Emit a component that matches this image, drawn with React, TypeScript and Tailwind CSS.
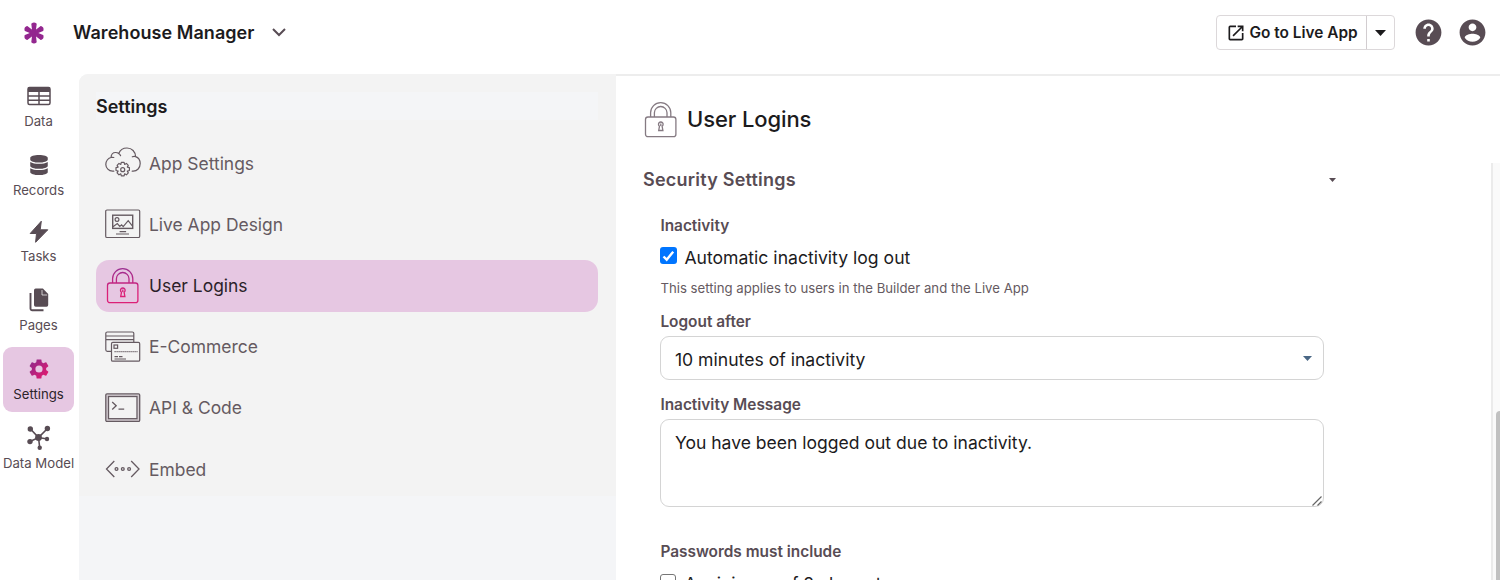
import type { ReactNode } from "react";
import clsx from "clsx";
import { FaDatabase } from "react-icons/fa";
import { MdHelp, MdOpenInNew } from "react-icons/md";

const TableIcon = () => (
    <svg width="24" height="20" viewBox="0 0 24 20" fill="none" stroke="currentColor" strokeWidth="1.5">
        <rect x="1" y="1.5" width="22" height="17" rx="1.5" />
        <path d="M1 1.5h22v4.5H1z" fill="currentColor" stroke="none" />
        <path d="M1 10h22M1 14.2h22M12 5v13.5" />
    </svg>
);

const BoltIcon = () => (
    <svg width="20" height="24" viewBox="0 0 20 24" fill="currentColor" stroke="currentColor" strokeWidth="1" strokeLinejoin="round">
        <path d="M12.3 1.2 1.2 13.5h6.3L6.6 22.3 18.8 9.8h-7.6z" />
    </svg>
);

const PagesIcon = () => (
    <svg width="20" height="24" viewBox="0 0 20 24" fill="currentColor">
        <path d="M6.7.5h7.2l5.3 5.4v11.2a1.7 1.7 0 0 1-1.7 1.7H6.7A1.7 1.7 0 0 1 5 17.1V2.2A1.7 1.7 0 0 1 6.7.5z" />
        <path d="M13 2v5h5.2" fill="none" stroke="#fff" strokeWidth=".7" />
        <path d="M1.5 5v15.6a1.7 1.7 0 0 0 1.7 1.7h11.3" fill="none" stroke="currentColor" strokeWidth="1.9" />
    </svg>
);

const GearIcon = () => (
    <svg width="24" height="24" viewBox="0 0 24 24">
        <defs>
            <linearGradient id="gear" x1="0" y1="0" x2="1" y2="1">
                <stop offset="0.1" stopColor="#932a8a" />
                <stop offset="0.9" stopColor="#e01a70" />
            </linearGradient>
        </defs>
        <path
            fill="url(#gear)"
            fillRule="evenodd"
            d="M19.14 12.94c.04-.3.06-.61.06-.94 0-.32-.02-.64-.07-.94l2.03-1.58c.18-.14.23-.41.12-.61l-1.92-3.32c-.12-.22-.37-.29-.59-.22l-2.39.96c-.5-.38-1.03-.7-1.62-.94l-.36-2.54c-.04-.24-.24-.41-.48-.41h-3.84c-.24 0-.43.17-.47.41l-.36 2.54c-.59.24-1.13.57-1.62.94l-2.39-.96c-.22-.08-.47 0-.59.22L2.74 8.87c-.12.21-.08.47.12.61l2.03 1.58c-.05.3-.09.63-.09.94s.02.64.07.94l-2.03 1.58c-.18.14-.23.41-.12.61l1.92 3.32c.12.22.37.29.59.22l2.39-.96c.5.38 1.03.7 1.62.94l.36 2.54c.05.24.24.41.48.41h3.84c.24 0 .44-.17.47-.41l.36-2.54c.59-.24 1.13-.56 1.62-.94l2.39.96c.22.08.47 0 .59-.22l1.92-3.32c.12-.22.07-.47-.12-.61l-2.01-1.58zM12 15.6a3.6 3.6 0 1 1 0-7.2 3.6 3.6 0 0 1 0 7.2z"
        />
    </svg>
);

const ModelIcon = () => (
    <svg width="24" height="26" viewBox="0 0 24 26" fill="currentColor" stroke="currentColor" strokeWidth="1.6">
        <path d="M3.5 4 11.5 12.5 20.5 3.5M3 16.5l8.5-4 9 1.5M11.5 12.5l1.2 10" fill="none" />
        <g stroke="none">
            <circle cx="11.5" cy="12.5" r="3.4" />
            <circle cx="3.3" cy="4" r="2.7" />
            <circle cx="20.4" cy="3.5" r="2.7" />
            <circle cx="3" cy="16.6" r="2.7" />
            <circle cx="20" cy="14" r="2.2" />
            <circle cx="12.7" cy="22.7" r="2.2" />
        </g>
    </svg>
);

const CloudGearIcon = () => (
    <svg width="36" height="32" viewBox="0 0 36 32" fill="none" stroke="currentColor" strokeWidth="1.2" strokeLinecap="round">
        <path d="M8.8 24.2H7.5A7 7 0 0 1 .8 17.4c0-3.6 2.6-6.5 5.2-6.9.2-3.4 2.4-5 4.6-5 1.2 0 2.3.3 3.1 1C15 3.2 18 1 22 1c5 0 8.4 3.7 8.6 8.6 2.6.9 4.6 3.6 4.6 7 0 4.3-3.1 7.6-7 7.6h-1M6 10.5q1.6-.3 2.8 0M13.7 6.5q1.3.8 1.9 2.2M30.6 9.6q-1.7-.4-3.3.2" />
        <circle cx="17.7" cy="22.7" r="2" />
        <path strokeLinejoin="round" d="m16.3 15.4 2.8 0 .5 2 1.8-1 1.9 1.9-1 1.8 2.1.6v2.8l-2.1.6 1 1.8-1.9 1.9-1.8-1-.5 2.1h-2.8l-.5-2.1-1.8 1-1.9-1.9 1-1.8-2.1-.6v-2.8l2.1-.6-1-1.8 1.9-1.9 1.8 1z" />
    </svg>
);

const DesignIcon = () => (
    <svg width="36" height="30" viewBox="0 0 36 30" fill="none" stroke="currentColor" strokeWidth="1.2">
        <rect x=".7" y="1" width="34" height="27.5" rx="1.3" />
        <rect x="7.7" y="6.2" width="20" height="13.2" strokeWidth="1.4" />
        <circle cx="12" cy="10.5" r="1.9" />
        <path d="m8 17.8 4.3-3.3 2.5 3 1.8-1.6 1.6 1.8 5-6.1 4.5 5.8" />
        <path d="M14.6 22.6h6.5M11 25h13" />
    </svg>
);

const LockIcon = ({ gradient = false }: { gradient?: boolean }) => (
    <svg width="34" height="36" viewBox="0 0 34 36" fill="none" stroke={gradient ? "url(#lock)" : "currentColor"} strokeWidth="1.3">
        <defs>
            <linearGradient id="lock" gradientUnits="userSpaceOnUse" x1="0" y1="0" x2="0" y2="36">
                <stop offset="0" stopColor="#9a2f91" />
                <stop offset="0.7" stopColor="#dc1f77" />
            </linearGradient>
        </defs>
        <rect x="1.5" y="15" width="30.4" height="19.7" rx="2.5" />
        <path d="M6.6 15V10.8a10.1 10.1 0 0 1 20.2 0V15M10.4 15V10.8a6.3 6.3 0 0 1 12.6 0V15" />
        <path d="M15.5 24.2a2.3 2.3 0 1 1 2.6 0l.8 4.3h-4.2zM16.8 21.5v2.6" />
    </svg>
);

const CardsIcon = () => (
    <svg width="36" height="32" viewBox="0 0 36 32" fill="none" stroke="currentColor" strokeWidth="1.2">
        <path d="M6 20.3H2.3A1.5 1.5 0 0 1 .8 18.8V2.5A1.5 1.5 0 0 1 2.3 1h25a1.5 1.5 0 0 1 1.5 1.5V11M.8 5h28M.8 8.7h28" />
        <rect x="6.5" y="11.4" width="28.2" height="18.8" rx="1.3" />
        <rect x="9" y="14" width="3.6" height="3.3" />
        <path d="M9.5 20.7h23" strokeDasharray="1.2 .8" />
        <path d="M9.5 25.6h3.5M14 25.6h3.5M9.5 28h11.5" />
    </svg>
);

const TerminalIcon = () => (
    <svg width="36" height="30" viewBox="0 0 36 30" fill="none" stroke="currentColor" strokeWidth="1.3">
        <rect x="2.1" y="2.2" width="31.3" height="25" stroke="#d5cdd2" strokeWidth="2" />
        <rect x=".8" y=".9" width="33.9" height="27.5" rx="1.2" />
        <rect x="3.5" y="3.5" width="28.5" height="22.2" />
        <path d="m7.2 9 4 3.7-4 3.8M13.5 16.2h5.7" />
    </svg>
);

const EmbedIcon = () => (
    <svg width="36" height="20" viewBox="0 0 36 20" fill="none" stroke="currentColor" strokeWidth="1.3">
        <path d="M9.3 2 1.5 10l7.8 8M26.2 2l7.8 8-7.8 8" />
        <circle cx="11.5" cy="10" r="1.4" />
        <circle cx="17.8" cy="10" r="1.4" />
        <circle cx="24.1" cy="10" r="1.4" />
    </svg>
);

const Logo = () => (
    <svg width="22" height="22" viewBox="-11 -11 22 22" fill="#93278f" stroke="#93278f" strokeWidth="1.4" strokeLinejoin="round">
        {[0, 60, 120, 180, 240, 300].map((angle) => (
            <path key={angle} d="M-.9 0-2-9Q0-10.7 2-9L.9 0z" transform={`rotate(${angle})`} />
        ))}
    </svg>
);

const AccountIcon = () => (
    <svg width="31" height="31" viewBox="0 0 24 24" fill="currentColor" className="ml-[13px] text-[#584c54]">
        <path d="M12 2C6.48 2 2 6.48 2 12s4.48 10 10 10 10-4.48 10-10S17.52 2 12 2zm0 3c1.66 0 3 1.34 3 3s-1.34 3-3 3-3-1.34-3-3 1.34-3 3-3zm0 14.2c-2.5 0-4.71-1.28-6-3.22.03-1.99 4-3.08 6-3.08 1.99 0 5.97 1.09 6 3.08-1.29 1.94-3.5 3.22-6 3.22z" />
    </svg>
);

const Caret = ({ className }: { className?: string }) => (
    <svg viewBox="0 0 10 5" className={className} fill="currentColor" preserveAspectRatio="none">
        <path d="M0 0h10L5 5z" />
    </svg>
);

type Item = { label: string; icon: ReactNode; active?: boolean };

const railItems: (Item & { space: string })[] = [
    { label: "Data", icon: <TableIcon />, space: "mb-[4px]" },
    { label: "Records", icon: <FaDatabase size={20} />, space: "mb-[1.5px]" },
    { label: "Tasks", icon: <BoltIcon />, space: "mb-[3.5px]" },
    { label: "Pages", icon: <PagesIcon />, space: "mb-[4px]" },
    { label: "Settings", icon: <GearIcon />, active: true, space: "mb-[4px]" },
    { label: "Data Model", icon: <ModelIcon />, space: "" },
];

const settingsItems: Item[] = [
    { label: "App Settings", icon: <CloudGearIcon /> },
    { label: "Live App Design", icon: <DesignIcon /> },
    { label: "User Logins", icon: <LockIcon gradient />, active: true },
    { label: "E-Commerce", icon: <CardsIcon /> },
    { label: "API & Code", icon: <TerminalIcon /> },
    { label: "Embed", icon: <EmbedIcon /> },
];

const Header = () => (
    <header className="flex h-[74px] shrink-0 items-center pb-[9px] pl-[23px] pr-[12px]">
        <Logo />
        <button className="ml-[28px] flex items-center text-[18px] font-semibold tracking-[0.06px] text-[#1c1b1d]">
            Warehouse Manager
            <svg width="14" height="9" viewBox="0 0 14 9" fill="none" stroke="#584c54" strokeWidth="2" className="ml-[17px]">
                <path d="m1 1 6 6 6-6" />
            </svg>
        </button>
        <div className="ml-auto flex h-[35px] w-[179px] rounded-[4px] border-[1.5px] border-[#dcd8da] text-[#1c1b1d]">
            <button className="flex w-[150px] items-center border-r border-[#d2cdd0] pl-[8.5px] text-[15.4px] font-semibold">
                <MdOpenInNew size={20} className="mr-[4px] shrink-0" />
                <span className="whitespace-nowrap">Go to Live App</span>
            </button>
            <button className="flex flex-1 items-center justify-center">
                <Caret className="h-[6px] w-[11px]" />
            </button>
        </div>
        <MdHelp size={31} className="ml-[18px] text-[#584c54]" />
        <AccountIcon />
    </header>
);

const Rail = () => (
    <nav className="flex w-[79px] shrink-0 flex-col pl-[3px] pr-[5px]">
        {railItems.map(({ label, icon, active, space }) => (
            <button
                key={label}
                className={clsx(
                    "flex h-[65px] shrink-0 flex-col items-center rounded-[9px] pt-[8.5px] text-[13.2px] leading-5",
                    active ? "bg-[#e6c7e2] text-[#2c232a]" : "text-[#584c54]",
                    space
                )}
            >
                <span className="flex h-[27px] items-center">{icon}</span>
                <span className="mt-[1px] whitespace-nowrap">{label}</span>
            </button>
        ))}
    </nav>
);

const SettingsPanel = () => (
    <aside className="w-[537px] shrink-0 rounded-tl-[9px] bg-[#f4f5f7]">
        <div className="h-[422px] rounded-tl-[9px] bg-[#f3f3f3] pl-[17px] pr-[18px] pt-[18px]">
            <h2 className="h-[28px] bg-[#f4f5f7] text-[18px] font-semibold leading-[29px] text-[#1c1b1d]">Settings</h2>
            <div className="mt-[17.3px] flex flex-col gap-[9.2px]">
                {settingsItems.map(({ label, icon, active }) => (
                    <button
                        key={label}
                        className={clsx(
                            "flex h-[52px] items-center rounded-[13px] pl-[9px] text-[17.45px]",
                            active ? "bg-[#e6c7e2] text-[#2c1f2a]" : "text-[#655a61]"
                        )}
                    >
                        <span className="mr-[8px] flex w-[36px] justify-center">{icon}</span>
                        <span className="pt-[1px]">{label}</span>
                    </button>
                ))}
            </div>
        </div>
    </aside>
);

const SecurityForm = () => (
    <div className="w-[680px] pl-[27px] text-[#1c1b1d]">
        <div className="flex h-[33px] w-[693px] items-center justify-between text-[#584c54]">
            <h3 className="text-[18px] font-semibold tracking-[0.22px]">Security Settings</h3>
            <Caret className="h-[4px] w-[7px]" />
        </div>
        <div className="ml-[17.4px] flex w-[663.4px] flex-col">
            <h4 className="mt-[18px] text-[15.4px] font-semibold leading-6 text-[#584c54]">Inactivity</h4>
            <label className="mt-[7px] flex h-6 items-center text-[17.6px]">
                <span className="mb-[3px] mr-[7px] flex h-[17px] w-[17px] items-center justify-center rounded-[3px] bg-[#0075ff]">
                    <svg width="13" height="12" viewBox="0 0 13 12" fill="none" stroke="#fff" strokeWidth="2.4">
                        <path d="m1.5 6.5 3.2 3.2 6.5-8" />
                    </svg>
                </span>
                <span className="pt-[2px]">Automatic inactivity log out</span>
            </label>
            <p className="mt-[9px] text-[13.2px] leading-5 text-[#655a61]">This setting applies to users in the Builder and the Live App</p>
            <h4 className="mt-[14px] text-[15.4px] font-semibold leading-5 text-[#584c54]">Logout after</h4>
            <button className="mt-[4px] flex h-[44px] items-center justify-between rounded-[9px] border-[1.5px] border-[#d4d4d4] pl-[13.5px] pr-[11px] text-[17.6px]">
                <span className="pt-[4px]">10 minutes of inactivity</span>
                <Caret className="h-[5px] w-[9px] text-[#4a6785]" />
            </button>
            <h4 className="mt-[15px] text-[15.4px] font-semibold leading-5 text-[#584c54]">Inactivity Message</h4>
            <div className="relative mt-[4px] h-[88px] rounded-[9px] border-[1.5px] border-[#d4d4d4] pl-[13.5px] pt-[11px] text-[17.55px] leading-6">
                You have been logged out due to inactivity.
                <svg width="10" height="10" viewBox="0 0 10 10" stroke="#666" strokeWidth="1.2" className="absolute bottom-0 right-px">
                    <path d="M.5 9.5l9-9M5.5 9.5l4-4" />
                </svg>
            </div>
            <h4 className="mt-[35px] text-[15.4px] font-semibold leading-5 text-[#584c54]">Passwords must include</h4>
            <label className="mt-[10px] flex h-6 items-start text-[17.5px] leading-6">
                <span className="mr-[8px] mt-[1.5px] h-[17px] w-[16px] rounded-[3px] border-[1.5px] border-[#767676]" />
                A minimum of 8 characters
            </label>
        </div>
    </div>
);

const App = () => (
    <div className="flex h-[580px] w-[1500px] flex-col overflow-hidden bg-white font-['Inter',sans-serif]">
        <Header />
        <div className="flex min-h-0 flex-1">
            <Rail />
            <SettingsPanel />
            <main className="flex min-w-0 flex-1 flex-col border-t-2 border-[#ededed]">
                <div className="flex h-[87px] shrink-0 items-center pl-[28px]">
                    <span className="text-[#857a82]">
                        <LockIcon />
                    </span>
                    <h1 className="ml-[9px] text-[22px] font-medium tracking-[-0.1px] text-[#1c1b1d]">User Logins</h1>
                </div>
                <div className="flex min-h-0 flex-1 overflow-hidden">
                    <SecurityForm />
                    <div className="ml-auto flex w-[9px] justify-end overflow-hidden border-l-2 border-[#ebebeb] bg-[#fafafa]">
                        <div className="mt-[248px] w-[4px] rounded-tl-[4px] bg-[#c1c1c1]" />
                    </div>
                </div>
            </main>
        </div>
    </div>
);

export default App;
